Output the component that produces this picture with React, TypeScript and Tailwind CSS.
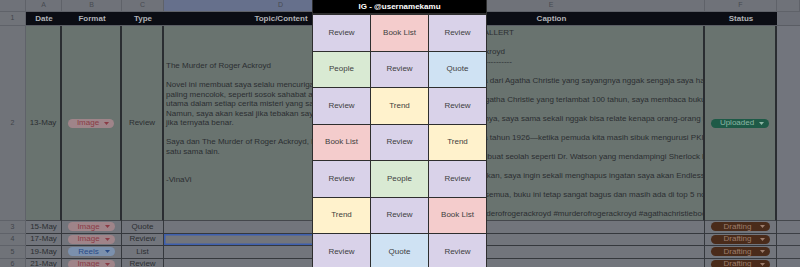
import React from "react";

type Tone = "image" | "reels" | "uploaded" | "drafting";

const chipTone: Record<Tone, string> = {
  image: "bg-[#9f8489] text-[#8a3b45]",
  reels: "bg-[#7b90ad] text-[#284a86]",
  uploaded: "bg-[#1e5a47] text-[#8db6a5]",
  drafting: "bg-[#4a2b1a] text-[#9d7d6c]",
};

const Chip = ({ label, tone }: { label: string; tone: Tone }) => (
  <div className={`mx-[6px] w-full h-[9px] rounded-full flex items-center pl-[4px] pr-[5px] ${chipTone[tone]}`}>
    <span className="flex-1 text-center leading-none">{label}</span>
    <svg width="5" height="3" viewBox="0 0 5 3" className="shrink-0">
      <path d="M0 0h5L2.5 3z" fill="currentColor" />
    </svg>
  </div>
);

const topicLines = [
  "The Murder of Roger Ackroyd",
  "",
  "Novel ini membuat saya selalu mencurigai karakter yang",
  "paling mencolok, seperti sosok sahabat atau asisten tokoh",
  "utama dalam setiap cerita misteri yang saya baca.",
  "Namun, saya akan kesal jika tebakan saya meleset, dan senang",
  "jika ternyata benar.",
  "",
  "Saya dan The Murder of Roger Ackroyd, kami saling melengkapi",
  "satu sama lain.",
  "",
  "",
  "-VinaVi",
];

const captionLines = [
  "WARNING!!! SPOILER ALLERT",
  "",
  "The Murder of Roger Ackroyd",
  "-".repeat(42),
  "",
  "Ini adalah novel pertama dari Agatha Christie yang sayangnya nggak sengaja saya hancurkan sendiri kejutannya.",
  "",
  "Sebagai seorang fans Agatha Christie yang terlambat 100 tahun, saya membaca buku-lain lebih dulu.",
  "",
  "Jujur, setelah membacanya, saya sama sekali nggak bisa relate kenapa orang-orang begitu terkejut.",
  "",
  "Buku ini diterbitkan pada tahun 1926—ketika pemuda kita masih sibuk mengurusi PKI-PKI.",
  "",
  "Kita sebagai pembaca dibuat seolah seperti Dr. Watson yang mendampingi Sherlock Holmes.",
  "",
  "Seandainya bisa dikabulkan, saya ingin sekali menghapus ingatan saya akan Endless Night.",
  "",
  "Namun terlepas dari itu semua, buku ini tetap sangat bagus dan masih ada di top 5 novel favorit saya.",
  "",
  "#bookstagramindo #murderofrogerackroyd #murderofrogerackroyd #agathachristiebooks",
];

const rows: { n: string; date: string; format: [string, Tone]; type: string }[] = [
  { n: "3", date: "15-May", format: ["Image", "image"], type: "Quote" },
  { n: "4", date: "17-May", format: ["Image", "image"], type: "Review" },
  { n: "5", date: "19-May", format: ["Reels", "reels"], type: "List" },
  { n: "6", date: "21-May", format: ["Image", "image"], type: "Review" },
];

const tileBg: Record<string, string> = {
  Review: "bg-[#d9d2e9]",
  "Book List": "bg-[#f4cccc]",
  People: "bg-[#d9ead3]",
  Quote: "bg-[#cfe2f3]",
  Trend: "bg-[#fff2cc]",
};

const feed = [
  "Review", "Book List", "Review",
  "People", "Review", "Quote",
  "Review", "Trend", "Review",
  "Book List", "Review", "Trend",
  "Review", "People", "Review",
  "Trend", "Review", "Book List",
  "Review", "Quote", "Review",
];

const letter = "flex items-center justify-center bg-[#6f7279] border-r border-b border-[#5f6269] text-[7px] text-[#474a51]";
const rowNum = "flex items-center justify-center bg-[#707379] border-r border-b border-[#5f6269] text-[7px] text-[#404349]";
const head = "flex items-center justify-center bg-[#0b0d14] border-b border-[#5a5d64] font-bold text-[#b0b2b7]";
const big = "flex items-center justify-center bg-[#69736f] border-b border-b-[#44474c] border-r-2 border-r-[#2a2d31]";
const cell = "flex items-center justify-center bg-[#72757c] border-r border-b border-[#35383d]";

const App = () => {
  return (
    <div className="relative w-[800px] h-[267px] overflow-hidden bg-[#71747b] font-['Liberation_Sans',Arial,sans-serif] text-[8px] text-[#2b2e31]">
      <div className="grid grid-cols-[26px_36px_60px_42px_234px_307px_72px_23px] grid-rows-[12px_14px_195px_12.5px_12.5px_12.5px_12.5px]">
        {/* column letters */}
        <div className={letter}></div>
        <div className={letter}>A</div>
        <div className={letter}>B</div>
        <div className={letter}>C</div>
        <div className={`${letter} bg-[#66708c] text-[#2f3a5e]`}>D</div>
        <div className={letter}>E</div>
        <div className={letter}>F</div>
        <div className={letter}></div>

        {/* header row */}
        <div className={rowNum}>1</div>
        <div className={head}>Date</div>
        <div className={head}>Format</div>
        <div className={head}>Type</div>
        <div className={head}>Topic/Content</div>
        <div className={head}>Caption</div>
        <div className={head}>Status</div>
        <div className="bg-[#6c6f77] border-b border-[#5a5d64]"></div>

        {/* row 2 */}
        <div className={rowNum}>2</div>
        <div className={big}>13-May</div>
        <div className={big}>
          <Chip label="Image" tone="image" />
        </div>
        <div className={big}>Review</div>
        <div className="flex flex-col justify-center overflow-hidden bg-[#69736f] border-b border-[#44474c] px-[2px] leading-[9.5px]">
          {topicLines.map((t, i) => (
            <div key={i} className="h-[9.5px] whitespace-nowrap">{t}</div>
          ))}
        </div>
        <div className="flex flex-col justify-center overflow-hidden bg-[#69736f] border-b border-b-[#44474c] border-r-2 border-r-[#2a2d31] px-[2px] leading-[9.5px]">
          {captionLines.map((t, i) => (
            <div key={i} className="h-[9.5px] whitespace-nowrap">{t}</div>
          ))}
        </div>
        <div className={big}>
          <Chip label="Uploaded" tone="uploaded" />
        </div>
        <div className="bg-[#72757d] border-b border-[#44474c]"></div>

        {/* rows 3+ */}
        {rows.map((r) => (
          <React.Fragment key={r.n}>
            <div className={r.n === "4" ? `${rowNum} bg-[#66708c] text-[#2f3a5e]` : rowNum}>{r.n}</div>
            <div className={`${cell} bg-[#6b766f]`}>{r.date}</div>
            <div className={cell}>
              <Chip label={r.format[0]} tone={r.format[1]} />
            </div>
            <div className={cell}>{r.type}</div>
            <div className={r.n === "4" ? `${cell} shadow-[inset_0_0_0_1.5px_#3d5fae]` : cell}></div>
            <div className={cell}></div>
            <div className={cell}>
              <Chip label="Drafting" tone="drafting" />
            </div>
            <div className="bg-[#72757d] border-b border-[#3c3f45]"></div>
          </React.Fragment>
        ))}
      </div>

      {/* feed preview */}
      <div className="absolute left-[312px] top-0 w-[175px] bg-[#2e2e2e] border-x border-[#2e2e2e]">
        <div className="h-[13px] bg-black text-white font-bold flex items-center justify-center">
          IG - @usernamekamu
        </div>
        <div className="mt-[2px] grid grid-cols-3 gap-px auto-rows-[35.5px]">
          {feed.map((f, i) => (
            <div key={i} className={`flex items-center justify-center text-[#404040] ${tileBg[f]}`}>
              {f}
            </div>
          ))}
        </div>
      </div>
    </div>
  );
};

export default App;
